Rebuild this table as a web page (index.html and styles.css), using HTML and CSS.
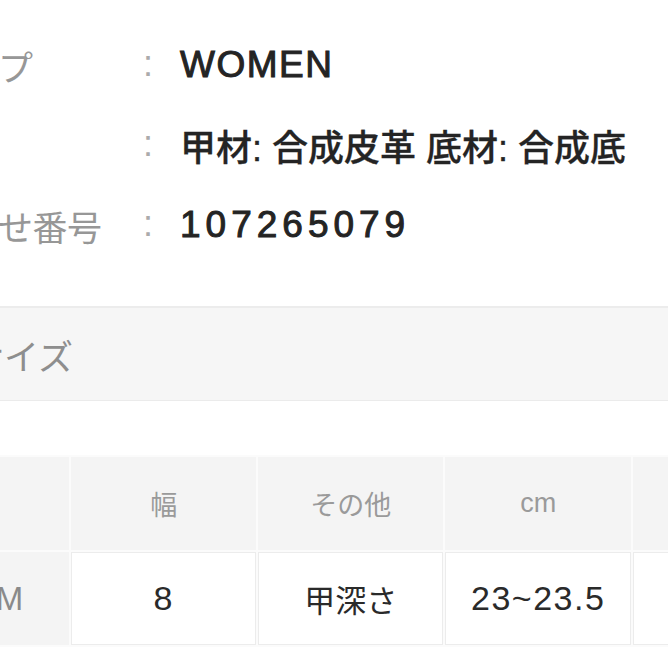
FILE: index.html
```html
<!DOCTYPE html>
<html lang="ja">
<head>
<meta charset="utf-8">
<link rel="stylesheet" href="styles.css">
</head>
<body>
<div class="page">
  <dl class="spec">
    <div class="row">
      <dt class="label">商品タイプ</dt>
      <dd class="colon">:</dd>
      <dd class="value latin">WOMEN</dd>
    </div>
    <div class="row">
      <dt class="label">素材</dt>
      <dd class="colon">:</dd>
      <dd class="value jp">甲材: 合成皮革 底材: 合成底</dd>
    </div>
    <div class="row">
      <dt class="label">問い合わせ番号</dt>
      <dd class="colon">:</dd>
      <dd class="value num">107265079</dd>
    </div>
  </dl>

  <div class="band">サイズ</div>

  <table class="size-table">
    <thead>
      <tr>
        <th class="c0"></th>
        <th>幅</th>
        <th>その他</th>
        <th>cm</th>
        <th></th>
      </tr>
    </thead>
    <tbody>
      <tr>
        <th class="c0 rowhead">M</th>
        <td class="num-cell">8</td>
        <td class="jp-cell">甲深さ</td>
        <td class="num-cell">23~23.5</td>
        <td></td>
      </tr>
    </tbody>
  </table>

  <div class="rule"></div>
</div>
</body>
</html>
```

FILE: styles.css
```css
html, body {
  margin: 0;
  padding: 0;
  background: #ffffff;
  overflow: hidden;
}

body {
  font-family: "Liberation Sans", "Noto Sans CJK JP", sans-serif;
  color: #2a2a2a;
}

.page {
  margin-left: -140px;
  width: 960px;
}

.spec {
  margin: 0;
  padding-top: 25px;
}

.row {
  display: grid;
  grid-template-columns: 280px 40px 1fr;
  height: 80px;
  align-items: center;
}

.label {
  font-size: 35px;
  color: #979797;
  white-space: nowrap;
  letter-spacing: -0.5px;
}

.colon {
  margin: 0;
  font-size: 36px;
  color: #ababab;
  padding-left: 3px;
  padding-bottom: 2px;
}

.value {
  margin: 0;
  font-size: 36px;
  font-weight: 400;
  color: #242424;
  white-space: nowrap;
  -webkit-text-stroke: 1px #242424;
}

.value.jp {
  font-weight: 500;
  -webkit-text-stroke: 0.3px #242424;
}

.value.latin {
  letter-spacing: 1.5px;
  font-size: 37px;
}

.value.num {
  letter-spacing: 5px;
  font-size: 37px;
}

.band {
  margin-top: 41px;
  height: 92px;
  background: #f6f6f6;
  border-top: 2px solid #ececec;
  border-bottom: 1px solid #ebebeb;
  padding-left: 109px;
  font-size: 35px;
  color: #8e8e8e;
  display: flex;
  align-items: center;
}

.size-table {
  margin-top: 54px;
  border-collapse: separate;
  border-spacing: 2px 2px;
  margin-left: -2px;
  background: #fbfbfb;
  table-layout: fixed;
}

.size-table th,
.size-table td {
  width: 184px;
  height: 93px;
  padding: 0;
  text-align: center;
  vertical-align: middle;
}

.size-table .c0 {
  width: 210px;
}

.size-table thead th {
  background: #f4f4f4;
  font-size: 27px;
  font-weight: 400;
  color: #9a9a9a;
}

.size-table tbody td {
  background: #ffffff;
  border: 1px solid #ececec;
  font-size: 34px;
  color: #2a2a2a;
  height: 91px;
}

.size-table tbody .rowhead {
  background: #f4f4f4;
  font-size: 33px;
  font-weight: 400;
  color: #8a8a8a;
  text-align: right;
  padding-right: 46px;
  width: 164px;
}

.size-table .jp-cell {
  font-size: 31px;
}

.size-table .num-cell {
  letter-spacing: 1.5px;
}

.rule {
  margin-top: 21px;
  height: 1px;
  background: #cccccc;
}
```
